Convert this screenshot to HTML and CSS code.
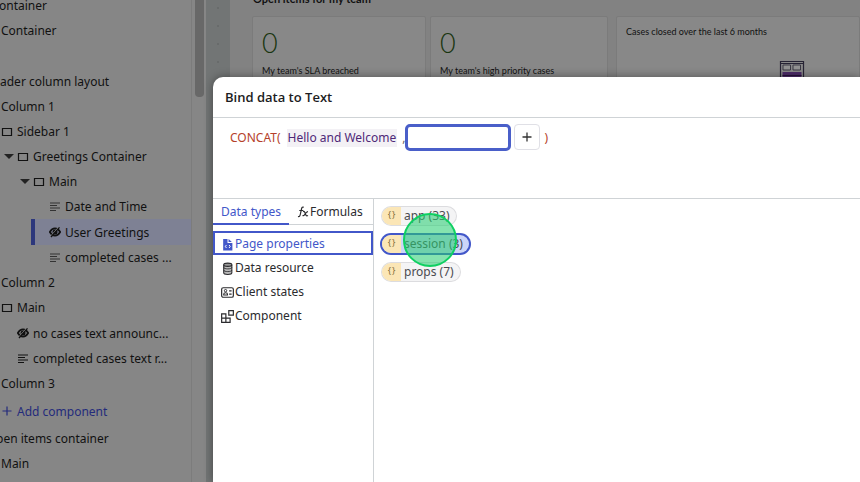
FILE: index.html
```html
<!DOCTYPE html>
<html lang="en">
<head>
<meta charset="utf-8">
<title>Bind data to Text</title>
<link rel="stylesheet" href="styles.css">
</head>
<body>
<svg class="defs" aria-hidden="true">
  <symbol id="box" viewBox="0 0 12 12"><path d="M1.5 2.5h9v7h-9z" fill="none" stroke="currentColor" stroke-width="1.2"/></symbol>
  <symbol id="lines" viewBox="0 0 12 12"><path d="M1 2h10M1 4.500h7M1 7h10M1 9.500h6" fill="none" stroke="currentColor" stroke-width="1.1"/></symbol>
  <symbol id="eye" viewBox="0 0 12 12"><path d="M.8 6C2.500 3 4.500 2.400 6 2.400S9.500 3 11.200 6C9.500 9 7.500 9.600 6 9.600S2.500 9 .8 6z" fill="none" stroke="currentColor" stroke-width="1.700"/><circle cx="6" cy="6" r="2.500" fill="currentColor"/><path d="M1.500 10.300 9.700 1" stroke="#868686" stroke-width="1"/><path d="M2 11 10.500 1.400" stroke="currentColor" stroke-width="1.300"/></symbol>
</svg>
<div class="app">
  <nav class="tree" aria-label="Components">
    <ul>
      <li class="row cut-small">ontainer</li>
      <li class="row root">Container</li>
      <li class="row spacer"></li>
      <li class="row">ader column layout</li>
      <li class="row root">Column 1</li>
      <li class="row l1"><svg><use href="#box"/></svg>Sidebar 1</li>
      <li class="row l1b"><i class="caret"></i><svg><use href="#box"/></svg>Greetings Container</li>
      <li class="row l2b"><i class="caret"></i><svg><use href="#box"/></svg>Main</li>
      <li class="row l4"><svg class="soft"><use href="#lines"/></svg>Date and Time</li>
      <li class="row l4 tall selected"><svg><use href="#eye"/></svg>User Greetings</li>
      <li class="row l4"><svg class="soft"><use href="#lines"/></svg>completed cases ...</li>
      <li class="row root">Column 2</li>
      <li class="row l1"><svg><use href="#box"/></svg>Main</li>
      <li class="row l2 tall"><svg><use href="#eye"/></svg>no cases text announc...</li>
      <li class="row l2"><svg><use href="#lines"/></svg>completed cases text r...</li>
      <li class="row root">Column 3</li>
      <li class="row l1 add"><button type="button"><svg viewBox="0 0 12 12"><path d="M6 1.500v9M1.500 6h9" stroke="currentColor" stroke-width="1.200"/></svg>Add component</button></li>
      <li class="row cut">pen items container</li>
      <li class="row root">Main</li>
    </ul>
  </nav>
  <div class="track"><div class="thumb"></div></div>
  <div class="gutter"></div>
  <main class="canvas">
    <h2>Open items for my team</h2>
    <div class="cards">
      <section class="card"><strong>0</strong><p>My team's SLA breached</p></section>
      <section class="card"><strong>0</strong><p>My team's high priority cases</p></section>
      <section class="card chart"><p>Cases closed over the last 6 months</p>
        <svg viewBox="0 0 26 24"><path d="M1.500 24V1.500h23V24M1 3.500h24" fill="none" stroke="#262334" stroke-width="1.200"/><path d="M4 5h7.500v5H4zM14 5h7.500v5H14z" fill="#929292" stroke="#3b3944"/><path d="M3.500 12h19v12h-19z" fill="#4b2a66"/><path d="M3.500 15.500h19" stroke="#251238"/></svg>
      </section>
    </div>
  </main>
</div>

<div class="dialog" role="dialog" aria-labelledby="title">
  <header><h1 id="title">Bind data to Text</h1></header>
  <div class="formula">
    <span class="fn">CONCAT(</span><span class="literal">Hello and Welcome</span><span class="comma">,</span><input type="text" aria-label="Argument"><button type="button" class="plus" aria-label="Add argument"><svg viewBox="0 0 12 12"><path d="M6 1.500v9M1.500 6h9" stroke="#333" stroke-width="1.300"/></svg></button><span class="fn close">)</span>
  </div>
  <div class="body">
    <div class="side">
      <div class="tabs" role="tablist">
        <button type="button" role="tab" aria-selected="true" class="active">Data types</button>
        <button type="button" role="tab" aria-selected="false"><svg viewBox="0 0 12 12"><path d="M1 10.500c1.500.5 2-.5 2.400-2.500L4.500 3C4.900 1.300 5.500.800 6.800 1.200M2.300 4.500h4M6 5.700c1.500-.7 1.800.3 2.300 2s1 2.700 2.700 1.800M11 5.700C9.500 5.500 8.500 7.500 7.500 8.800S6.200 9.800 5.500 9.500" fill="none" stroke="currentColor" stroke-width="1.200"/></svg>Formulas</button>
      </div>
      <div class="types">
        <button type="button" class="chosen"><svg viewBox="0 0 12 12"><path d="M2 1h4v3.500h4.500V11.500H2z" fill="currentColor"/><path d="M7 1v2.800h3z" fill="currentColor"/><path d="M5 6.500 4 7.800l1 1.400M7.500 6.500l1 1.300-1 1.400" fill="none" stroke="#fff" stroke-width=".9"/></svg>Page properties</button>
        <button type="button"><svg viewBox="0 0 12 12"><path d="M2.500 2.500v7.500c0 2 7.500 2 7.500 0V2.500" fill="#bbb" stroke="currentColor"/><ellipse cx="6.250" cy="2.500" rx="3.750" ry="1.500" fill="#999" stroke="currentColor"/><path d="M2.500 5c0 1.800 7.500 1.800 7.500 0M2.500 7.500c0 1.800 7.500 1.800 7.500 0" fill="none" stroke="currentColor" stroke-width=".8"/></svg>Data resource</button>
        <button type="button"><svg viewBox="0 0 12 12"><rect x=".6" y="1.600" width="10.800" height="8.800" rx="1.500" fill="none" stroke="currentColor" stroke-width="1.100"/><circle cx="4.200" cy="4.300" r="1.100" fill="none" stroke="currentColor" stroke-width=".9"/><path d="M2.500 8.300V7.500c0-1.600 3.500-1.600 3.500 0v.8zM7.500 4.500h2.300M7.500 7.500h2.300" fill="none" stroke="currentColor"/></svg>Client states</button>
        <button type="button"><svg viewBox="0 0 12 12"><path d="M.6 3.600H4.500V7.500H.6zM.6 7.500H4.500v3.900H.6zM4.500 7.500h3.900v3.900H4.500zM7.200.6h4.200v4.200H7.200z" fill="none" stroke="currentColor" stroke-width="1.100"/></svg>Component</button>
      </div>
    </div>
    <div class="values">
      <button type="button" class="pill"><span class="tag">{&#8202;}</span><span class="name">app (33)</span></button>
      <button type="button" class="pill picked"><span class="tag">{&#8202;}</span><span class="name">session (3)</span><span class="pointer"></span></button>
      <button type="button" class="pill"><span class="tag">{&#8202;}</span><span class="name">props (7)</span></button>
    </div>
  </div>
</div>
</body>
</html>
```

FILE: styles.css
```css
* { box-sizing: border-box; }
body {
  margin: 0;
  height: 100vh;
  overflow: hidden;
  background: #868686;
  color: #111;
  font-family: "Noto Sans", sans-serif;
  font-size: 12px;
}
button { font: inherit; color: inherit; background: none; border: 0; padding: 0; }
h1, h2, p, ul { margin: 0; padding: 0; }
.defs { display: none; }

.app { display: flex; height: 100%; }
.tree { width: 192px; flex: none; overflow: hidden; background: #868686; border-right: 1px solid #7c7c7c; }
.tree ul { list-style: none; margin-top: -7px; }
.row { display: flex; align-items: center; height: 25px; white-space: nowrap; }
.row svg { width: 12px; height: 12px; flex: none; margin-right: 4px; }
.row svg.soft { color: #333; }
.spacer, .tall { height: 26px; }
.root { padding-left: 1px; }
.l1 { padding-left: 1px; }
.l1b { padding-left: 4px; }
.l2b { padding-left: 20px; }
.l2 { padding-left: 17px; }
.l4 { padding-left: 49px; }
.cut-small { margin-left: -1px; }
.cut { margin-left: -4px; }
.caret { border: 5px solid transparent; border-top-color: #222; border-bottom: 0; margin-right: 3px; }
.selected { margin-left: 31px; padding-left: 14px; border-left: 4px solid #2c377c; background: #7e8194; }
.add { height: 30px; color: #242b7c; }
.add button { display: flex; align-items: center; }

.track { width: 14px; flex: none; padding: 0 2px 0 3px; background: #868686; }
.thumb { height: 97px; border-radius: 0 0 4px 4px; background: #686868; }
.gutter {
  width: 24px;
  flex: none;
  background: radial-gradient(circle, #686b6b 1px, transparent 1px) 3px -1px / 18px 18px, #727575;
}
.canvas { flex: 1; min-width: 0; padding-left: 22px; background: #828282; font-family: Lato, sans-serif; }
.canvas h2 { font-size: 11px; line-height: 14px; margin: -8px 0 10px; padding-left: 1px; }
.cards { display: grid; grid-template-columns: 174px 178px minmax(244px, 1fr); gap: 4px; }
.card { height: 90px; padding: 10px 9px; background: #888; border: 1px solid #7b7b7b; border-radius: 2px; }
.card strong { display: block; font-size: 27px; line-height: 32px; font-weight: 300; color: #19350f; }
.card p { font-size: 9px; line-height: 12px; margin-top: 6px; }
.card.chart { margin-left: 4px; }
.card.chart p { margin: -1px 0 0; }
.chart svg { display: block; width: 26px; height: 24px; margin: 22px auto 0 153px; }

.dialog {
  position: absolute;
  inset: 77px 0 0 213px;
  display: flex;
  flex-direction: column;
  background: #fff;
  border-top-left-radius: 10px;
  box-shadow: 0 0 10px rgba(0, 0, 0, .4);
}
.dialog header { padding: 0 12px; border-bottom: 1px solid #cfd3d6; }
.dialog h1 { font: 600 13px/40px "Open Sans", sans-serif; color: #1c1c22; }
.formula { display: flex; align-items: flex-start; height: 81px; padding: 6px 17px; border-bottom: 1px solid #cfd3d6; line-height: 18px; }
.formula span { margin-top: 5px; }
.fn { color: #b5412a; }
.literal { margin-left: 6px; padding: 0 1px; background: #f3f1f5; color: #4f2878; }
.comma { margin-left: 5px; color: #666; }
.formula input { width: 106px; height: 27px; border: 3px solid #4a5fc9; border-radius: 5px; background: #fff; outline: none; }
.plus { display: flex; align-items: center; justify-content: center; width: 26px; height: 26px; margin-left: 3px; border: 1px solid #e0e0e6; border-radius: 4px; }
.plus svg { width: 12px; height: 12px; }
.close { margin-left: 4px; }

.body { flex: 1; display: flex; color: #2b2b2e; }
.side { width: 161px; flex: none; border-right: 1px solid #cfd3d6; }
.tabs { display: flex; height: 26px; border-bottom: 1px solid #cfd3d6; }
.tabs button { display: flex; align-items: center; padding: 0 8px; height: 25px; white-space: nowrap; }
.tabs .active { height: 26px; border-bottom: 2px solid #4257c9; color: #4257c9; }
.tabs svg { width: 12px; height: 12px; margin-right: 1px; }
.types { display: flex; flex-direction: column; padding-top: 6px; }
.types button { display: flex; align-items: center; height: 24px; padding: 0 8px; text-align: left; }
.types svg { width: 13px; height: 13px; margin: 2px 1px 0 0; }
.types .chosen { padding: 0 6px; border: 2px solid #4257c9; color: #4257c9; }
.values { display: flex; flex-direction: column; align-items: flex-start; gap: 10px; padding: 8px; }
.pill { position: relative; display: flex; height: 18px; border-radius: 9px; background: #f4f4f5; color: #4b4b50; line-height: 18px; box-shadow: 0 0 0 1px #dcdcdf; }
.tag { width: 19px; border-radius: 9px 0 0 9px; background: #fbe6b6; color: #86713c; font-size: 9px; line-height: 16px; }
.name { padding: 0 6px 0 3px; word-spacing: normal; }
.picked { z-index: 1; background: #ccd5f8; box-shadow: 0 0 0 2px #4257c9; }
.pointer { position: absolute; left: 21px; top: -22px; width: 54px; height: 54px; border: 2px solid #0fd062; border-radius: 50%; background: rgba(38, 205, 113, .56); }
```
